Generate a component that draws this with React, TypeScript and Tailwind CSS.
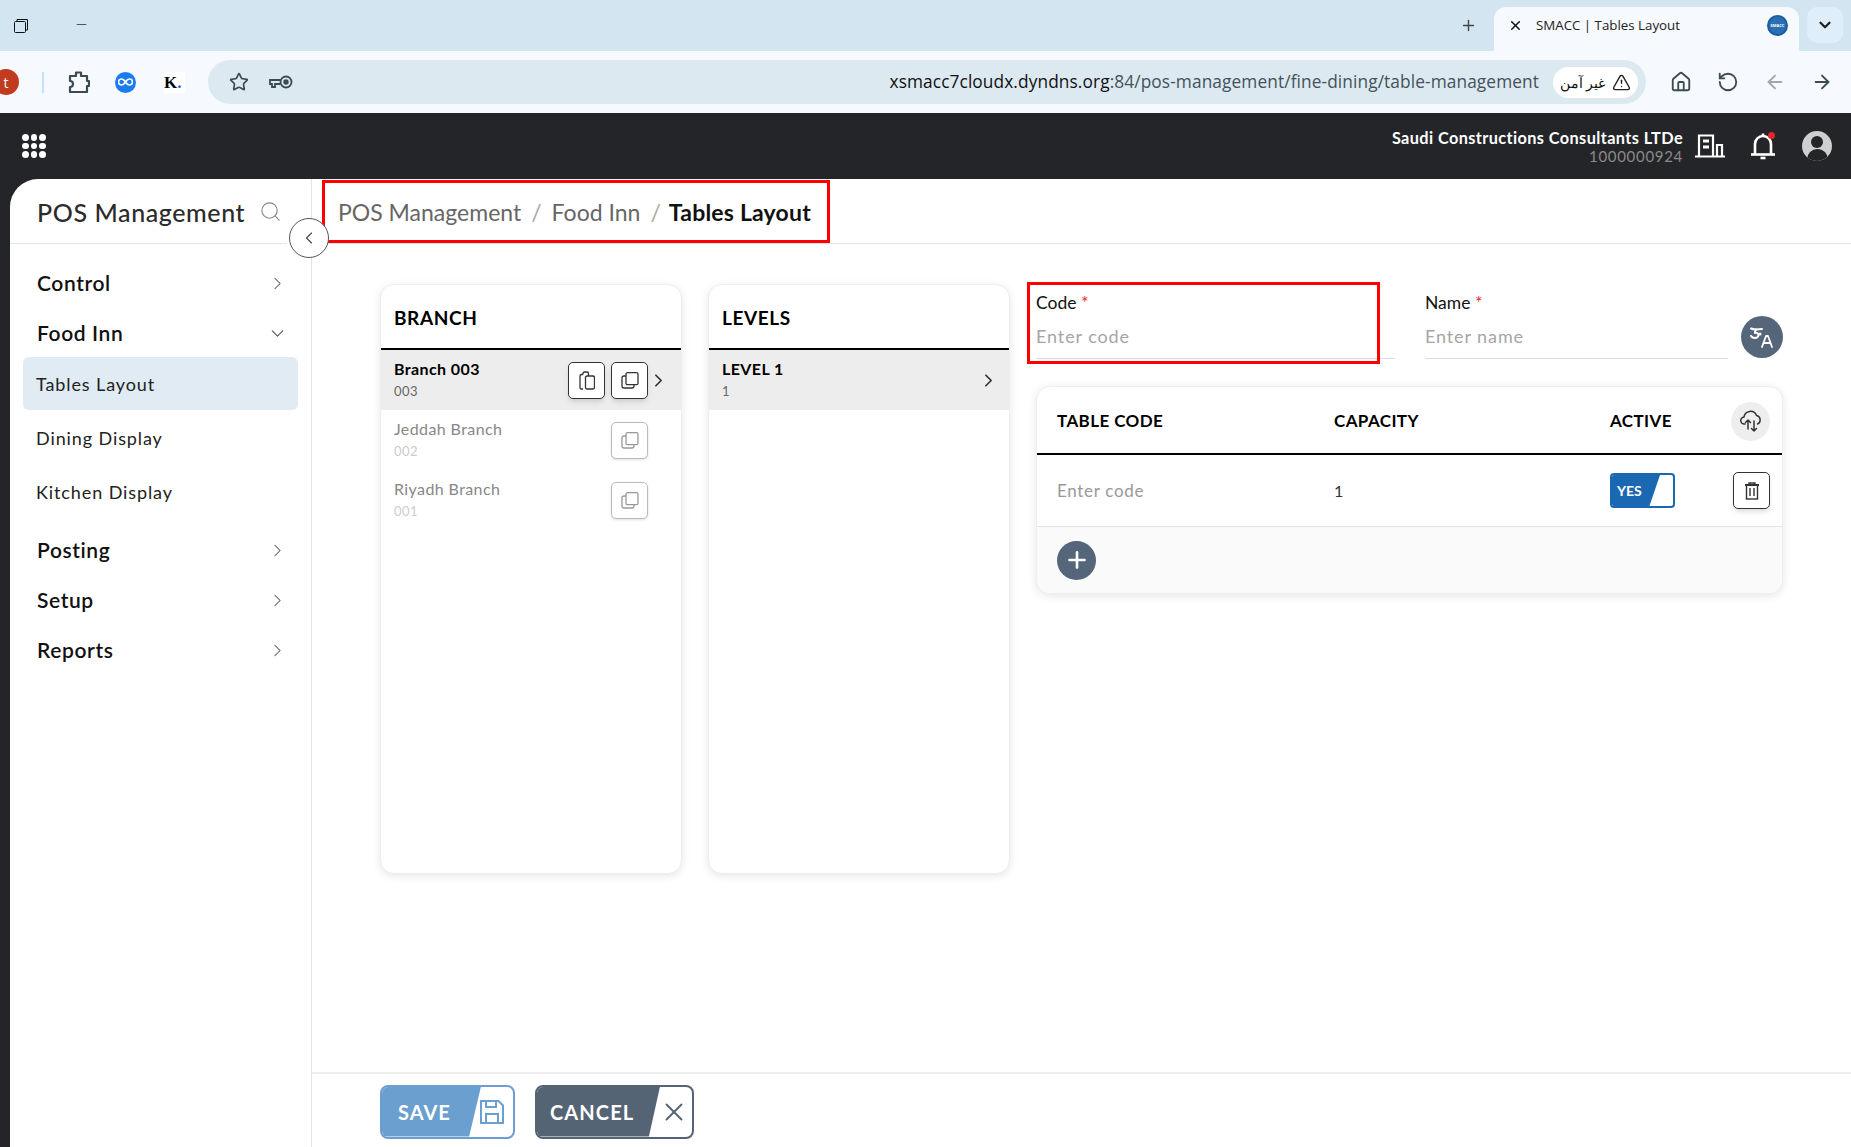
import React from 'react';
import {
  ArrowLeft, ArrowRight, ChevronDown, ChevronLeft, ChevronRight,
  House, Minus, Plus, RotateCcw, Search, Star, TriangleAlert, X,
} from 'lucide-react';

const sideItems = ['Dining Display', 'Kitchen Display'];

const CopyIcon = () => (
  <svg width="18" height="17" viewBox="0 0 18 17" fill="none" stroke="currentColor" strokeWidth="1.300">
    <rect x="5" y="0.7" width="12" height="12" rx="1.500" />
    <path d="M5 4H3a2 2 0 0 0-2 2v8a2 2 0 0 0 2 2h8a2 2 0 0 0 2-2v-1" />
  </svg>
);

const PasteIcon = () => (
  <svg width="16" height="19" viewBox="0 0 16 19" fill="none" stroke="currentColor" strokeWidth="1.300">
    <rect x="6.500" y="5" width="9" height="13" rx="1.500" />
    <path d="M4 18H2.500A1.500 1.500 0 0 1 1 16.500V5a1.500 1.500 0 0 1 1.500-1.500H4M4 3.500V2.500A1.500 1.500 0 0 1 5.500 1h2.500A1.500 1.500 0 0 1 9.500 2.500V5" />
  </svg>
);

const TrashIcon = () => (
  <svg width="16" height="18" viewBox="0 0 16 18" fill="none" stroke="#333" strokeWidth="1.400">
    <path d="M1 3h14" strokeWidth="1.800" />
    <path d="M5 3V1h6v2" />
    <rect x="2.500" y="3" width="11" height="14" />
    <path d="M6 6v8M10 6v8" />
  </svg>
);

const CloudIcon = () => (
  <svg width="22" height="24" viewBox="0 0 22 24" fill="none" stroke="#333" strokeWidth="1.500" strokeLinecap="round" strokeLinejoin="round">
    <path d="M5 15H4.500a3.500 3.500 0 0 1-.5-7 6.500 6.500 0 0 1 12.500-1.500 4.500 4.500 0 0 1 1 8.500" />
    <path d="M8 20v-9M5.500 13.500 8 11l2.500 2.500" />
    <path d="M14 12v10M11.500 19.500 14 22l2.500-2.500" />
  </svg>
);

const TranslateIcon = () => (
  <svg width="26" height="26" viewBox="0 0 26 26" fill="none" stroke="white" strokeWidth="2" strokeLinecap="round" strokeLinejoin="round">
    <path d="M2 4.500c3 1.500 7 1 11 .5" />
    <path d="M7 5.500c-1 2-1.500 3-1 3.500 2-.5 3.500.5 3.500 2s-1.500 3-3.500 3-3.500-1-4-2" />
    <path d="M13 23l4-11h2l4 11M14.500 19h7" strokeWidth="1.800" />
    <circle cx="11" cy="10" r="0.600" />
  </svg>
);

const SaveIcon = () => (
  <svg width="24" height="24" viewBox="0 0 24 24" fill="none" stroke="#6a9fcf" strokeWidth="2">
    <path d="M1 1h17.500L23 5.500V23H1z" />
    <path d="M6 1v6h10V1M6 23v-9h12v9" />
  </svg>
);

const CopyButton = ({ active }: { active?: boolean }) => (
  <button className={`w-[37px] h-[37px] rounded-[5px] border flex items-center justify-center bg-white ${active ? 'border-[#333] shadow-md text-[#333]' : 'border-[#bbb] shadow-sm text-[#999]'}`}>
    <CopyIcon />
  </button>
);

const Row = ({ name, code, active, paste }: { name: string; code: string; active?: boolean; paste?: boolean }) => (
  <div className={`h-[60px] flex items-center pl-[13px] ${active ? 'bg-[#ededed] pr-[12px]' : 'pr-[33px]'}`}>
    <div className="flex-1">
      <div className={`text-[16px] tracking-[0.4px] leading-[23px] ${active ? 'font-bold text-black' : 'text-[#888]'}`}>{name}</div>
      <div className={`text-[13px] tracking-[0.4px] leading-[23px] ${active ? 'text-[#666]' : 'text-[#ccc]'}`}>{code}</div>
    </div>
    {paste && (
      <button className="w-[37px] h-[37px] mr-[6px] rounded-[5px] border border-[#333] shadow-md flex items-center justify-center bg-white text-[#333]">
        <PasteIcon />
      </button>
    )}
    <CopyButton active={active} />
    {active && <ChevronRight size={21} strokeWidth={2} className="text-[#333]" />}
  </div>
);

const Card = ({ title, children }: { title: string; children: React.ReactNode }) => (
  <div className="w-[302px] h-[590px] shrink-0 rounded-[14px] border border-[#eee] bg-white shadow-[0_2px_8px_rgba(0,0,0,0.1)] overflow-hidden">
    <div className="h-[60px] flex items-center pl-[13px] pt-[3px] text-[19px] tracking-[0.6px] font-bold text-black border-b-2 border-black box-content">{title}</div>
    {children}
  </div>
);

const SideGroup = ({ label, open }: { label: string; open?: boolean }) => (
  <div className="h-[50px] flex items-center justify-between pl-[27px] pr-[23px]">
    <span className="text-[21px] tracking-[0.6px] font-semibold text-[#111]">{label}</span>
    {open ? <ChevronDown size={21} strokeWidth={1.200} className="text-[#555]" /> : <ChevronRight size={21} strokeWidth={1.200} className="text-[#555]" />}
  </div>
);

const BrowserBar = () => (
  <div className="font-['Open_Sans',sans-serif]">
    <div className="h-[51px] bg-[#d3e5f0] flex items-start pl-[14px] pr-[8px]">
      <svg width="14" height="14" viewBox="0 0 14 14" className="mt-[19px]" fill="none" stroke="#111" strokeWidth="1">
        <rect x="0.5" y="2.5" width="11" height="11" rx="1" /><path d="M3 2.5V0.5H13.5V11H11.5" />
      </svg>
      <Minus size={15} strokeWidth={1} className="mt-[17px] ml-[46px] text-black" />
      <Plus size={17} strokeWidth={2} className="mt-[17px] ml-auto mr-[17px] text-[#444]" />
      <div className="mt-[7px] w-[305px] h-[44px] rounded-t-[12px] bg-[#f6f9fd] flex items-center pl-[14px] pr-[11px] pb-[7px]">
        <X size={15} strokeWidth={2.400} className="text-[#111]" />
        <span className="ml-[13px] text-[13.300px] text-[#222] flex-1">SMACC | Tables Layout</span>
        <div className="w-[21px] h-[21px] rounded-full bg-[#2a6fb5] border-2 border-[#1c5d9f] text-[4px] font-bold text-white flex items-center justify-center">SMACC</div>
      </div>
      <div className="mt-[7px] ml-[8px] w-[36px] h-[36px] rounded-[10px] bg-[#deeefa] flex items-center justify-center">
        <ChevronDown size={18} strokeWidth={3} className="text-[#222]" />
      </div>
    </div>
    <div className="h-[62px] bg-[#f6f9fd] flex items-center relative overflow-hidden">
      <div className="w-[26px] h-[26px] rounded-full bg-[#c03b1f] text-white text-[14px] flex items-center justify-center -ml-[7px] shrink-0">t</div>
      <div className="w-[2px] h-[21px] bg-[#bfe3f8] ml-[23px]" />
      <svg width="22" height="24" viewBox="0 0 22 24" className="ml-[24px]" fill="none" stroke="#3c4a52" strokeWidth="2.200" strokeLinejoin="round">
        <path d="M2 6h6V2.500h5V6h6v5h2v5h-2v6H2v-5a2.500 2.500 0 0 0 0-6z" />
      </svg>
      <div className="w-[21px] h-[21px] rounded-full bg-[#1a7cf0] ml-[25px] flex items-center justify-center">
        <svg width="15" height="8" viewBox="0 0 15 8" fill="none" stroke="white" strokeWidth="1.700">
          <path d="M7.500 4C6 1.500 4.500 1 3.500 1a3 3 0 0 0 0 6c1 0 2.500-.5 4-3zm0 0C9 1.500 10.500 1 11.500 1a3 3 0 0 1 0 6c-1 0-2.500-.5-4-3z" />
        </svg>
      </div>
      <div className="ml-[28px] w-[21px] h-[21px] bg-white text-[17px] leading-[21px] font-bold font-['Liberation_Serif',serif] text-black">K<span className="text-[#1a4bf0]">.</span></div>
      <div className="ml-[23px] flex-1 h-[44px] rounded-full bg-[#dde9f0] flex items-center pl-[21px] pr-[8px] mr-[205px]">
        <Star size={20} strokeWidth={2} className="text-[#3c4a52]" />
        <svg width="24" height="14" viewBox="0 0 24 14" className="ml-[20px]" fill="none" stroke="#3c4a52" strokeWidth="1.800">
          <circle cx="17" cy="7" r="5.500" /><circle cx="17" cy="7" r="1.800" fill="#3c4a52" />
          <path d="M11.500 5H1v4h2v3h3V9h5.500" />
        </svg>
        <div className="ml-auto text-[17.300px] text-[#43525c] mr-[14px] tracking-[0.1px]">
          <span className="text-[#111]">xsmacc7cloudx.dyndns.org</span>:84/pos-management/fine-dining/table-management
        </div>
        <div className="w-[85px] h-[31px] rounded-full bg-white flex items-center justify-center gap-[7px]">
          <span className="text-[14px] text-[#111] font-['Noto_Sans',sans-serif]" dir="rtl">غير آمن</span>
          <TriangleAlert size={19} strokeWidth={1.800} className="text-[#222]" />
        </div>
      </div>
      <div className="absolute right-[18px] top-[20px] flex gap-[24px] items-center">
        <House size={22} strokeWidth={2} className="text-[#3c4a52]" />
        <RotateCcw size={22} strokeWidth={2} className="text-[#3c4a52] ml-[1px]" />
        <ArrowLeft size={22} strokeWidth={2} className="text-[#a0a8ad] ml-[1px]" />
        <ArrowRight size={22} strokeWidth={2} className="text-[#3c4a52] ml-[1px]" />
      </div>
    </div>
  </div>
);

const Header = () => (
  <div className="h-[66px] bg-[#242528] flex items-center pl-[22px] pr-[19px]">
    <div className="grid grid-cols-3 gap-[2px]">
      {[...Array(9)].map((_, i) => (
        <div key={i} className="w-[6.500px] h-[6.500px] rounded-full bg-white" />
      ))}
    </div>
    <div className="ml-auto text-right pb-[1px]">
      <div className="text-[16.300px] tracking-[0.4px] leading-[20px] font-bold text-white">Saudi Constructions Consultants LTDe</div>
      <div className="text-[15px] leading-[16px] text-[#8a8a8a] tracking-[0.7px]">1000000924</div>
    </div>
    <svg width="30" height="24" viewBox="0 0 30 24" className="ml-[12px]" fill="none" stroke="white" strokeWidth="2.200">
      <path d="M0 22.500h30M4 22V1.500h14V22M22 22V11h5v11" />
      <path d="M8 7h6M8 13h6" strokeWidth="3" />
    </svg>
    <div className="relative ml-[25px] mr-[26px]">
      <svg width="26" height="28" viewBox="0 0 26 28" fill="none" stroke="white" strokeWidth="2.600">
        <path d="M5 22V12a8 8 0 0 1 16 0v10" />
        <path d="M1 22.500h24" />
        <path d="M13 1.500v3" />
        <path d="M10.500 26h5" />
      </svg>
      <div className="absolute top-[0px] right-[1px] w-[7px] h-[7px] rounded-full bg-[#e5262b]" />
    </div>
    <div className="w-[30px] h-[30px] rounded-full bg-[#cfcfcf] overflow-hidden flex flex-col items-center pt-[5px]">
      <div className="w-[12px] h-[12px] rounded-full bg-[#242528]" />
      <div className="w-[21px] h-[12px] rounded-t-full bg-[#242528] mt-[1px]" />
    </div>
  </div>
);

const Sidebar = () => (
  <div className="w-[302px] shrink-0 bg-white rounded-tl-[28px] border-r border-[#dfe5ea] font-[Lato,sans-serif]">
    <div className="h-[65px] mr-[24px] border-b border-[#dfe5ea] flex items-center pl-[27px] pr-[5px] justify-between">
      <span className="text-[25px] tracking-[0.6px] pt-[3px] text-[#2b2b2b] font-medium">POS Management</span>
      <Search size={23} strokeWidth={1.200} className="text-[#888]" />
    </div>
    <div className="pt-[14px]">
      <SideGroup label="Control" />
      <SideGroup label="Food Inn" open />
      <div className="mx-[13px] -mt-[1px] h-[53px] rounded-[6px] bg-[#e1ebf4] flex items-center pl-[13px] pt-[2px] text-[18px] tracking-[0.9px] text-[#222]">Tables Layout</div>
      {sideItems.map((item) => (
        <div key={item} className="h-[54px] flex items-center pl-[26px] pt-[2px] text-[18px] tracking-[0.9px] text-[#222]">{item}</div>
      ))}
      <div className="mt-[7px]">
        <SideGroup label="Posting" />
        <SideGroup label="Setup" />
        <SideGroup label="Reports" />
      </div>
    </div>
  </div>
);

const Field = ({ label, placeholder, className }: { label: string; placeholder: string; className: string }) => (
  <div className={`border-b border-[#ddd] h-[73px] ${className}`}>
    <div className="text-[17.500px] leading-[33px] text-[#111]">{label} <span className="text-[#e5262b] text-[18px]">*</span></div>
    <div className="text-[18px] tracking-[0.9px] leading-[24px] text-[#a5a5a5] mt-[5px]">{placeholder}</div>
  </div>
);

const TablePanel = () => (
  <div className="w-[747px] shrink-0 mt-[2px]">
    <div className="flex items-end">
      <Field label="Code" placeholder="Enter code" className="w-[361px]" />
      <Field label="Name" placeholder="Enter name" className="w-[305px] ml-[30px]" />
      <div className="w-[42px] h-[42px] rounded-full bg-[#55657a] ml-[13px] mb-[1px] flex items-center justify-center text-white">
        <TranslateIcon />
      </div>
    </div>
    <div className="mt-[27px] rounded-[14px] border border-[#eee] bg-white shadow-[0_2px_10px_rgba(0,0,0,0.1)] overflow-hidden">
      <div className="h-[64px] border-b-2 border-black box-content flex items-center pl-[20px] pr-[12px] pt-[2px] text-[17px] tracking-[0.4px] font-bold text-black">
        <div className="w-[277px]">TABLE CODE</div>
        <div className="w-[276px]">CAPACITY</div>
        <div className="flex-1">ACTIVE</div>
        <div className="w-[39px] h-[39px] rounded-full bg-[#eee] flex items-center justify-center">
          <CloudIcon />
        </div>
      </div>
      <div className="h-[72px] border-b border-[#e4e4e4] flex items-center pl-[20px] pr-[12px]">
        <div className="w-[277px] text-[17px] tracking-[0.7px] text-[#999]">Enter code</div>
        <div className="w-[276px] text-[16px] text-[#333]">1</div>
        <div className="flex-1">
          <div className="w-[65px] h-[35px] rounded-[4px] border-2 border-[#1b68b2] bg-white overflow-hidden">
            <div className="h-full bg-[#1b68b2] text-white text-[14px] font-bold flex items-center pl-[5px] [clip-path:polygon(0_0,100%_0,78%_100%,0_100%)] w-[48px]">YES</div>
          </div>
        </div>
        <button className="w-[37px] h-[37px] rounded-[5px] border border-[#333] bg-white shadow-md flex items-center justify-center">
          <TrashIcon />
        </button>
      </div>
      <div className="h-[66px] bg-[#fafafa] flex items-center pl-[20px]">
        <div className="w-[39px] h-[39px] rounded-full bg-[#55657a] flex items-center justify-center text-white">
          <Plus size={26} strokeWidth={2.400} />
        </div>
      </div>
    </div>
  </div>
);

export default function App() {
  return (
    <div className="w-[1851px] h-[1147px] overflow-hidden flex flex-col bg-[#242528] relative">
      <BrowserBar />
      <div className="font-[Lato,sans-serif]"><Header /></div>
      <div className="flex-1 flex pl-[10px] min-h-0">
        <Sidebar />
        <div className="flex-1 bg-white flex flex-col font-[Lato,sans-serif] relative">
          <div className="h-[65px] border-b border-[#e2e2e2] flex items-center pl-[26px] pt-[2px] text-[23px]">
            <span className="text-[#666]">POS Management</span>
            <span className="text-[#aaa] mx-[10px]">/</span>
            <span className="text-[#666]">Food Inn</span>
            <span className="text-[#aaa] ml-[10px] mr-[8px]">/</span>
            <span className="font-bold tracking-[0.2px] text-[#111]">Tables Layout</span>
          </div>
          <div className="flex-1 flex items-start gap-[26px] pl-[68px] pt-[40px]">
            <Card title="BRANCH">
              <Row name="Branch 003" code="003" active paste />
              <Row name="Jeddah Branch" code="002" />
              <Row name="Riyadh Branch" code="001" />
            </Card>
            <Card title="LEVELS">
              <div className="h-[60px] flex items-center pl-[13px] pr-[10px] bg-[#ededed]">
                <div className="flex-1">
                  <div className="text-[16px] tracking-[0.4px] leading-[23px] font-bold text-black">LEVEL 1</div>
                  <div className="text-[13px] leading-[23px] text-[#666]">1</div>
                </div>
                <ChevronRight size={21} strokeWidth={2} className="text-[#333]" />
              </div>
            </Card>
            <TablePanel />
          </div>
          <div className="h-[75px] border-t-2 border-[#eee] flex items-center gap-[20px] pl-[68px] pt-[2px]">
            <button className="w-[135px] h-[54px] rounded-[8px] border-2 border-[#6a9fcf] bg-white overflow-hidden flex items-center">
              <div className="w-[99px] h-full bg-[#6a9fcf] text-white text-[20px] font-bold flex items-center pl-[16px] tracking-[1px] [clip-path:polygon(0_0,100%_0,88%_100%,0_100%)]">SAVE</div>
              <div className="-ml-[1px]"><SaveIcon /></div>
            </button>
            <button className="w-[159px] h-[54px] rounded-[8px] border-2 border-[#556475] bg-white overflow-hidden flex items-center">
              <div className="w-[123px] h-full bg-[#556475] text-white text-[20px] font-bold flex items-center pl-[13px] tracking-[1.100px] [clip-path:polygon(0_0,100%_0,91%_100%,0_100%)]">CANCEL</div>
              <X size={30} strokeWidth={1.500} className="text-[#556475] -ml-[1px]" />
            </button>
          </div>
          {/* annotation boxes drawn over the page */}
          <div className="absolute left-[10px] top-[1px] w-[508px] h-[63px] border-[3px] border-[#f00]" />
          <div className="absolute left-[715px] top-[103px] w-[353px] h-[82px] border-[3px] border-[#f00]" />
          <div className="absolute -left-[23px] top-[39px] w-[40px] h-[40px] rounded-full border border-[#555] bg-white flex items-center justify-center text-[#444]">
            <ChevronLeft size={20} strokeWidth={1.300} />
          </div>
        </div>
      </div>
    </div>
  );
}
